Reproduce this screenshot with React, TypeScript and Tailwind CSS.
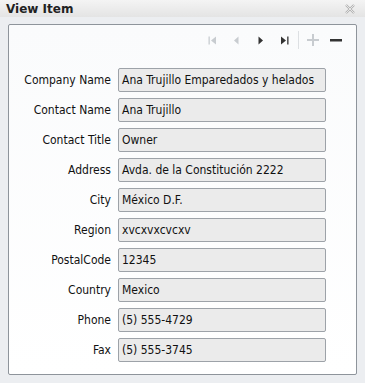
import React from 'react'

const fields: [string, string][] = [
  ['Company Name', 'Ana Trujillo Emparedados y helados'],
  ['Contact Name', 'Ana Trujillo'],
  ['Contact Title', 'Owner'],
  ['Address', 'Avda. de la Constitución 2222'],
  ['City', 'México D.F.'],
  ['Region', 'xvcxvxcvcxv'],
  ['PostalCode', '12345'],
  ['Country', 'Mexico'],
  ['Phone', '(5) 555-4729'],
  ['Fax', '(5) 555-3745'],
]

const App: React.FC = () => {
  return (
    <div className="w-[365px] h-[383px] bg-[#eceef1] flex flex-col font-['DejaVu_Sans_Condensed','Noto_Sans',sans-serif] text-[#111]">
      <div className="h-[17px] flex items-center justify-between pl-[6px] pr-[10px] bg-gradient-to-b from-[#f4f4f4] to-[#e4e4e4]">
        <span className="text-[12px] font-bold leading-none text-[#222] font-['DejaVu_Sans',sans-serif]">View Item</span>
        <svg width="10" height="10" viewBox="0 0 10 10" className="text-[#b0b0b0]">
          <path d="M1 1 L9 9 M9 1 L1 9" stroke="currentColor" strokeWidth="2.2" fill="none" />
          <path d="M1 1 L9 9 M9 1 L1 9" stroke="#f4f4f4" strokeWidth="0.8" fill="none" />
        </svg>
      </div>
      <div className="flex-1 pt-[7px] px-[8px] pb-[8px]">
        <div className="h-[351px] rounded-[2px] border border-[#8e949b] bg-gradient-to-b from-[#fafbfc] to-white flex flex-col">
          <div className="flex items-center justify-end h-[30px] pr-[14px]">
            <div className="flex items-center gap-[15px] mr-[9px]">
              <svg width="9" height="9" viewBox="0 0 9 9"><rect x="0.5" y="0.5" width="1.3" height="8" fill="#c8ccd0" /><path d="M8 0.5 L3 4.5 L8 8.5Z" fill="#c8ccd0" /></svg>
              <svg width="9" height="9" viewBox="0 0 9 9"><path d="M6.5 0.5 L2 4.5 L6.5 8.5Z" fill="#c8ccd0" /></svg>
              <svg width="9" height="9" viewBox="0 0 9 9"><path d="M2.5 0.5 L7 4.5 L2.5 8.5Z" fill="#333" /></svg>
              <svg width="9" height="9" viewBox="0 0 9 9"><path d="M1 0.5 L6 4.5 L1 8.5Z" fill="#333" /><rect x="7.2" y="0.5" width="1.3" height="8" fill="#333" /></svg>
            </div>
            <div className="w-px h-[18px] bg-[#dde0e3] mr-[8px]" />
            <div className="flex items-center gap-[11px]">
              <svg width="12" height="12" viewBox="0 0 12 12"><rect x="5" y="0" width="2" height="12" fill="#c8ccd0" /><rect x="0" y="5" width="12" height="2" fill="#c8ccd0" /></svg>
              <svg width="12" height="12" viewBox="0 0 12 12"><rect x="0" y="5" width="12" height="2.5" fill="#333" /></svg>
            </div>
          </div>
          <div className="flex flex-col gap-[6px] mt-[13px]">
            {fields.map(([label, value]) => (
              <div key={label} className="flex items-center">
                <div className="w-[109px] text-right text-[12px] pr-[7px] whitespace-nowrap">{label}</div>
                <div className="w-[208px] h-[24px] border border-[#9da2a8] rounded-[2px] bg-[#ebebeb] flex items-center pl-[3px] text-[12px] whitespace-nowrap overflow-hidden">
                  {value}
                </div>
              </div>
            ))}
          </div>
        </div>
      </div>
    </div>
  )
}

export default App
